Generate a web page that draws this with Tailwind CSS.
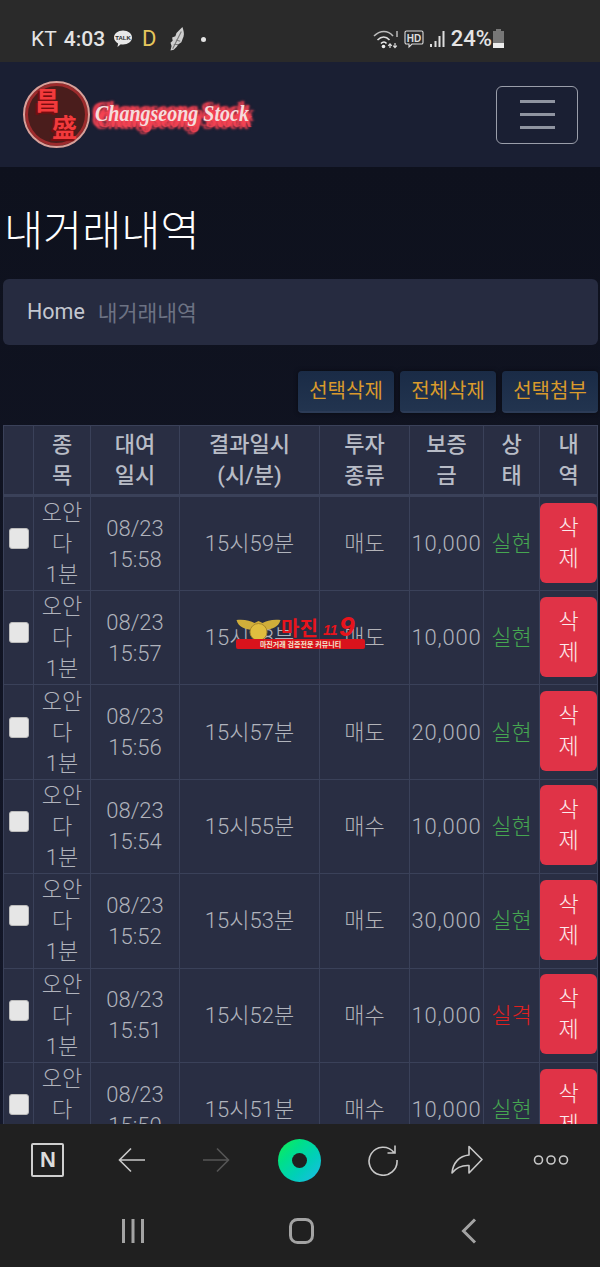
<!DOCTYPE html>
<html lang="ko">
<head>
    <meta charset="UTF-8">
    <meta name="viewport" content="width=device-width, initial-scale=1.0">
    <title>내거래내역</title>
    <script src="https://cdn.jsdelivr.net/npm/@tailwindcss/browser@4"></script>
</head>
<body class="bg-[#0d101c]">
<div class="h-[1267px] w-[600px] flex flex-col overflow-hidden relative font-['Noto_Sans_CJK_KR','Noto_Sans',sans-serif]">

    <!-- Status bar -->
    <div class="h-[62px] shrink-0 bg-[#2a2a2a] flex items-center justify-between pl-[31px] pr-[95px] pt-[16px] text-[#e4e4e4]">
        <div class="flex items-center">
            <span class="text-[21px] leading-none font-['Roboto'] mr-[7px]">KT</span>
            <span class="text-[21px] leading-none font-['Roboto'] font-medium mr-[8px]">4:03</span>
            <svg width="20" height="20" viewBox="0 0 20 20" class="mr-[9px]"><path d="M10 1.500c5 0 9 3 9 7s-4 7-9 7c-.8 0-1.500-.1-2.200-.2L4.500 18l.6-3.600C2.600 13 1 10.900 1 8.500c0-4 4-7 9-7z" fill="#e8e8e8"/><text x="10" y="11" font-size="6" font-weight="700" text-anchor="middle" fill="#2a2a2a" font-family="Liberation Sans">TALK</text></svg>
            <span class="text-[22px] leading-none font-['Roboto'] text-[#e6c65c] mr-[10px]">D</span>
            <svg width="20" height="26" viewBox="0 0 18 24" class="mr-[14px]"><path d="M14 1c1 3 2 6 1 9-1 2-1 3-2 5l-3 2-1 2-3 3-3 .5 1-4-1-3 2-2-.5-3 3-1 1-3z" fill="#cfcfcf"/><path d="M5 21L13 5M8 13l4 1M6 17l4 0" stroke="#777" stroke-width="1" fill="none"/></svg>
            <span class="w-[5px] h-[5px] rounded-full bg-[#e4e4e4]"></span>
        </div>
        <div class="flex items-center">
            <svg width="29" height="22" viewBox="0 0 29 22" fill="none" class="mr-[2px]"><path d="M1 8c6-6 14-6 19 0" stroke="#bbb" stroke-width="1.600"/><path d="M4.500 12c4-4 8.500-4 12 0" stroke="#ddd" stroke-width="1.600"/><path d="M8 15.500c2-2 4-2 5.500 0" stroke="#eee" stroke-width="1.600"/><circle cx="10.500" cy="18.500" r="1.800" fill="#eee"/><path d="M17 20v-4m-1.800 1.800l1.800-2 1.800 2M22 15v4.500m-1.800-1.800l1.800 2 1.800-2M24 3v6" stroke="#ddd" stroke-width="1.200"/></svg>
            <svg width="20" height="19" viewBox="0 0 20 19" fill="none" class="mr-[5px]"><path d="M2.500 1h15A1.500 1.500 0 0 1 19 2.500v10a1.500 1.500 0 0 1-1.500 1.500H8l-3 3v-3H2.500A1.500 1.500 0 0 1 1 12.500v-10A1.500 1.500 0 0 1 2.500 1z" stroke="#ddd" stroke-width="1.100"/><text x="10" y="11.500" font-size="10" font-weight="700" text-anchor="middle" fill="#ddd" font-family="Liberation Sans">HD</text></svg>
            <svg width="16" height="18" viewBox="0 0 16 18" class="mr-[6px]"><rect x="1" y="14" width="2" height="3" fill="#ddd"/><rect x="5.500" y="11" width="2" height="6" fill="#ddd"/><rect x="9.500" y="6" width="2" height="11" fill="#ddd"/><rect x="13.500" y="1" width="2" height="16" fill="#ddd"/></svg>
            <span class="text-[22px] leading-none font-['Roboto'] font-medium">24%</span>
            <svg width="13" height="20" viewBox="0 0 13 20"><rect x="4" y="0" width="5" height="3" fill="#777"/><rect x="1" y="2" width="11" height="12" fill="#777"/><rect x="1" y="14" width="11" height="5" fill="#eee"/></svg>
        </div>
    </div>

    <!-- Navbar -->
    <div class="h-[105px] shrink-0 bg-[#1a1f33] flex items-center justify-between pl-[23px] pr-[22px]">
        <div class="flex items-center">
            <div class="w-[67px] h-[67px] rounded-full bg-[#4a1d1c] border-[2px] border-[#d9a09a] flex flex-col text-[#f23a3c] font-bold text-[25px] leading-[28px] pl-[10px] pt-[2px] shadow-[inset_0_0_0_3px_#9c2a2c] font-['Noto_Sans_CJK_TC',sans-serif]">
                <span class="[text-shadow:-2px_2px_1px_#7a0d10]">昌</span>
                <span class="ml-[17px] -mt-[1px] [text-shadow:-2px_2px_1px_#7a0d10]">盛</span>
            </div>
            <span class="text-[20px] leading-none ml-[5px] mt-[-4px] scale-y-[1.2] font-['Liberation_Serif'] italic font-bold text-[#f5dcdc] [text-shadow:0_0_3px_#f44454,3px_3px_2px_#f44454,-3px_-3px_2px_#f44454,3px_5px_1px_#f44454,-3px_4px_2px_#f44454,5px_0_2px_#f44454,0_6px_2px_#f44454,0_-4px_2px_#f44454]">Changseong Stock</span>
        </div>
        <div class="w-[82px] h-[58px] border border-[#9a9eaa] rounded-[6px] flex flex-col items-center justify-center gap-[10px]">
            <span class="w-[35px] h-[3px] bg-[#8f94a1]"></span>
            <span class="w-[35px] h-[3px] bg-[#8f94a1]"></span>
            <span class="w-[35px] h-[3px] bg-[#8f94a1]"></span>
        </div>
    </div>

    <!-- Content -->
    <div class="flex-1 min-h-0 overflow-hidden bg-linear-to-b from-[#0e111d] to-[#14182a]">
        <h1 class="text-[42.500px] leading-[50px] text-white font-light pl-[4px] mt-[36px]">내거래내역</h1>

        <div class="ml-[3px] mr-[2px] mt-[26px] h-[66px] rounded-[6px] bg-[#262b40] flex items-center pl-[24px] text-[21.500px]">
            <span class="text-[#c3c7d0] font-['Roboto']">Home</span>
            <span class="text-[#6c7283] ml-[13px]">내거래내역</span>
        </div>

        <div class="flex justify-end gap-[6px] mt-[26px] pr-[2px]">
            <button class="h-[42px] w-[96px] pb-[3px] rounded-[4px] bg-linear-to-b from-[#1a2b46] to-[#22344f] border-b-2 border-[#2c3b56] shadow-[0_0_4px_#00000080] text-[#d99a2c] text-[20px]">선택삭제</button>
            <button class="h-[42px] w-[96px] pb-[3px] rounded-[4px] bg-linear-to-b from-[#1a2b46] to-[#22344f] border-b-2 border-[#2c3b56] shadow-[0_0_4px_#00000080] text-[#d99a2c] text-[20px]">전체삭제</button>
            <button class="h-[42px] w-[96px] pb-[3px] rounded-[4px] bg-linear-to-b from-[#1a2b46] to-[#22344f] border-b-2 border-[#2c3b56] shadow-[0_0_4px_#00000080] text-[#d99a2c] text-[20px]">선택첨부</button>
        </div>

        <table class="ml-[3px] mt-[12px] w-[595px] table-fixed border-collapse bg-[#292e43] text-[#b0b3bc] text-[22px] leading-[31px] text-center font-['Roboto','Noto_Sans_CJK_KR',sans-serif] font-light">
            <colgroup>
                <col class="w-[30px]"><col class="w-[57px]"><col class="w-[89px]"><col class="w-[140px]"><col class="w-[90px]"><col class="w-[74px]"><col class="w-[56px]"><col class="w-[58px]">
            </colgroup>
            <thead>
                <tr class="h-[70px] border-b-[3px] border-[#3a4159] text-[#b8bcc6]">
                    <th class="border border-[#3a4159] font-medium"></th>
                    <th class="border border-[#3a4159] font-medium">종<br>목</th>
                    <th class="border border-[#3a4159] font-medium">대여<br>일시</th>
                    <th class="border border-[#3a4159] font-medium">결과일시<br>(시/분)</th>
                    <th class="border border-[#3a4159] font-medium">투자<br>종류</th>
                    <th class="border border-[#3a4159] font-medium">보증<br>금</th>
                    <th class="border border-[#3a4159] font-medium">상<br>태</th>
                    <th class="border border-[#3a4159] font-medium">내<br>역</th>
                </tr>
            </thead>
            <tbody id="rows"></tbody>
        </table>
    </div>

    <!-- Browser toolbar -->
    <div class="h-[143px] shrink-0 bg-[#202020] flex flex-col">
        <div class="h-[72px] ml-[6px] w-[587px] grid grid-cols-7 items-center justify-items-center">
            <div class="w-[33px] h-[34px] border-2 border-[#cfcfcf] rounded-[2px] flex items-center justify-center text-[#dcdcdc] font-bold text-[22px] leading-none font-['Liberation_Sans']">N</div>
            <svg width="28" height="26" viewBox="0 0 28 26" fill="none" stroke="#c8c8c8" stroke-width="1.600"><path d="M27 13H2M13 1.500L1.500 13 13 24.500"/></svg>
            <svg width="28" height="26" viewBox="0 0 28 26" fill="none" stroke="#555" stroke-width="1.600"><path d="M1 13h25M15 1.500L26.500 13 15 24.500"/></svg>
            <div class="w-[43px] h-[43px] rounded-full bg-linear-to-br from-[#18ee3e] to-[#1fb8e8] flex items-center justify-center">
                <div class="w-[15px] h-[15px] rounded-full bg-[#202020]"></div>
            </div>
            <svg width="32" height="32" viewBox="0 0 32 32" fill="none" stroke="#c8c8c8" stroke-width="1.600"><path d="M27 8.500A14 14 0 1 0 30 16M28 1.500V9h-7.500"/></svg>
            <svg width="32" height="30" viewBox="0 0 32 30" fill="none" stroke="#c8c8c8" stroke-width="1.600" stroke-linejoin="round"><path d="M18 1.500L31 14.500 18 28v-7.500C10 20 5 23 1 28c1-10 7-17 17-18z"/></svg>
            <svg width="36" height="12" viewBox="0 0 36 12" fill="none" stroke="#c8c8c8" stroke-width="1.600"><circle cx="5.500" cy="6" r="4"/><circle cx="18" cy="6" r="4"/><circle cx="30.500" cy="6" r="4"/></svg>
        </div>
        <div class="ml-[49px] w-[504px] grid grid-cols-3 justify-items-center pt-[22px]">
            <svg width="24" height="26" viewBox="0 0 24 26" fill="#a3a3a3"><rect x="1" y="1" width="3" height="24"/><rect x="10.500" y="1" width="3" height="24"/><rect x="20" y="1" width="3" height="24"/></svg>
            <svg width="25" height="26" viewBox="0 0 25 26" fill="none" stroke="#a3a3a3" stroke-width="3"><rect x="1.500" y="1.500" width="22" height="23" rx="7"/></svg>
            <svg width="16" height="26" viewBox="0 0 16 26" fill="none" stroke="#a3a3a3" stroke-width="3"><path d="M14 1.500L2.500 13 14 24.500"/></svg>
        </div>
    </div>

    <!-- Watermark -->
    <div class="absolute left-[236px] top-[617px] w-[130px] h-[32px]">
        <svg width="45" height="30" viewBox="0 0 44 30" class="absolute left-0 top-0">
            <path d="M0 3c8-1 14 1 18 3l4-2 4 2c4-2 10-4 18-3-2 7-8 9-15 10l-3 7-4 6-4-6-3-7C8 12 2 10 0 3z" fill="#d0ae3a"/>
            <circle cx="22" cy="15" r="8.500" fill="#e0bd3f" stroke="#a8872a"/>
        </svg>
        <span class="absolute left-[45px] top-[-1px] text-[20px] leading-[24px] font-bold text-[#e8141c]">마진</span>
        <span class="absolute left-[87px] top-[5px] text-[14px] leading-[16px] font-bold italic text-[#e8141c] font-['Liberation_Sans']">11</span>
        <span class="absolute left-[103px] top-[-3px] text-[28px] leading-[26px] font-bold italic text-[#e8141c] font-['Liberation_Sans']">9</span>
        <div class="absolute left-0 top-[22px] w-[129px] h-[10px] rounded-[2px] bg-[#d9131c] text-[7px] leading-[10px] text-center text-[#f2e6d0] font-bold">마진거래 검증전문 커뮤니티</div>
    </div>
</div>

<script>
    const rows = [
        ['08/23', '15:58', '15시59분', '매도', '10,000', '실현'],
        ['08/23', '15:57', '15시58분', '매도', '10,000', '실현'],
        ['08/23', '15:56', '15시57분', '매도', '20,000', '실현'],
        ['08/23', '15:54', '15시55분', '매수', '10,000', '실현'],
        ['08/23', '15:52', '15시53분', '매도', '30,000', '실현'],
        ['08/23', '15:51', '15시52분', '매수', '10,000', '실격'],
        ['08/23', '15:50', '15시51분', '매수', '10,000', '실현'],
    ];

    document.getElementById('rows').innerHTML = rows.map(r => `
        <tr class="h-[94.4px]">
            <td class="border border-[#3a4159]"><span class="block mx-auto mb-[10px] w-[20px] h-[21px] rounded-[3px] bg-[#e6e6e6] border border-[#bbb]"></span></td>
            <td class="border border-[#3a4159]">오안<br>다<br>1분</td>
            <td class="border border-[#3a4159]">${r[0]}<br>${r[1]}</td>
            <td class="border border-[#3a4159]">${r[2]}</td>
            <td class="border border-[#3a4159] text-[#b3b3b8]">${r[3]}</td>
            <td class="border border-[#3a4159] px-0 whitespace-nowrap tracking-[0.8px]">${r[4]}</td>
            <td class="border border-[#3a4159] ${r[5] === '실현' ? 'text-[#46a651]' : 'text-[#e0201f]'}">${r[5]}</td>
            <td class="border border-[#3a4159]"><span class="block w-[57px] h-[80px] rounded-[6px] bg-[#e03347] text-white/90 pt-[9px] -translate-y-[1px]">삭<br>제</span></td>
        </tr>`).join('');
</script>
</body>
</html>
